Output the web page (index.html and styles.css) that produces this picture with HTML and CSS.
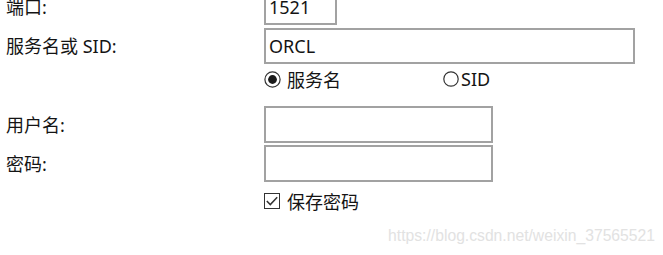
FILE: index.html
```html
<!DOCTYPE html>
<html lang="zh-CN">
<head>
<meta charset="utf-8">
<title>连接</title>
<link rel="stylesheet" href="styles.css">
</head>
<body>
<div class="form">
  <div class="row row-port">
    <div class="label">端口:</div>
    <div class="field field-port">1521</div>
  </div>
  <div class="row row-sid">
    <div class="label">服务名或 SID:</div>
    <div class="field field-wide">ORCL</div>
  </div>
  <div class="row row-radio">
    <div class="label"></div>
    <div class="radios">
      <div class="radio-item radio-first">
        <svg class="radio" width="17" height="17" viewBox="0 0 17 17"><circle cx="8.5" cy="8.5" r="7.6" fill="#fff" stroke="#333" stroke-width="1.2"/><circle cx="8.5" cy="8.5" r="4.4" fill="#1a1a1a"/></svg>
        <span>服务名</span>
      </div>
      <div class="radio-item">
        <svg class="radio" width="16" height="16" viewBox="0 0 16 16"><circle cx="8" cy="8" r="7.2" fill="#fff" stroke="#333" stroke-width="1.2"/></svg>
        <span>SID</span>
      </div>
    </div>
  </div>
  <div class="row row-user">
    <div class="label">用户名:</div>
    <div class="field field-mid"></div>
  </div>
  <div class="row row-pwd">
    <div class="label">密码:</div>
    <div class="field field-mid"></div>
  </div>
  <div class="row row-check">
    <div class="label"></div>
    <div class="check-item">
      <svg class="check" width="16" height="16" viewBox="0 0 16 16"><rect x="0.5" y="0.5" width="15" height="15" fill="#fff" stroke="#333" stroke-width="1"/><polyline points="2.8,8 6.3,11.6 13.2,4.3" fill="none" stroke="#333" stroke-width="1.5"/></svg>
      <span>保存密码</span>
    </div>
  </div>
</div>
<div class="watermark">https://blog.csdn.net/weixin_37565521</div>
</body>
</html>
```

FILE: styles.css
```css
html, body {
  margin: 0;
  padding: 0;
}
body {
  width: 663px;
  height: 255px;
  overflow: hidden;
  background: #ffffff;
  font-family: "Noto Sans", "Noto Sans CJK SC", sans-serif;
  font-size: 18px;
  color: #141414;
}
.form {
  display: flex;
  flex-direction: column;
  padding-left: 6px;
  margin-top: -11px;
}
.row {
  display: flex;
  align-items: center;
}
.label {
  width: 258px;
  flex: none;
  line-height: 20px;
}
.field {
  box-sizing: border-box;
  height: 36px;
  border: 2px solid #a2a2a2;
  padding: 0 3px;
  display: flex;
  align-items: center;
  background: #fff;
  line-height: 20px;
}
.field-port { width: 73px; }
.field-wide { width: 371px; }
.field-mid { width: 229px; height: 37px; }
.row-sid { margin-top: 3px; }
.row-radio { height: 30px; }
.radios {
  display: flex;
  align-items: center;
}
.radio-item {
  display: flex;
  align-items: center;
  gap: 2px;
}
.radio-first {
  width: 179px;
  gap: 6px;
}
.radio { display: block; flex: none; }
.row-user { margin-top: 12px; }
.row-pwd { margin-top: 2px; }
.row-check { margin-top: 8px; height: 22px; }
.check-item {
  display: flex;
  align-items: center;
  gap: 7px;
}
.check { display: block; flex: none; }
.watermark {
  margin-top: 14px;
  text-align: right;
  padding-right: 8px;
  font-family: "Liberation Sans", Arial, sans-serif;
  font-size: 15.7px;
  line-height: 20px;
  color: #e2e2e2;
}
```
